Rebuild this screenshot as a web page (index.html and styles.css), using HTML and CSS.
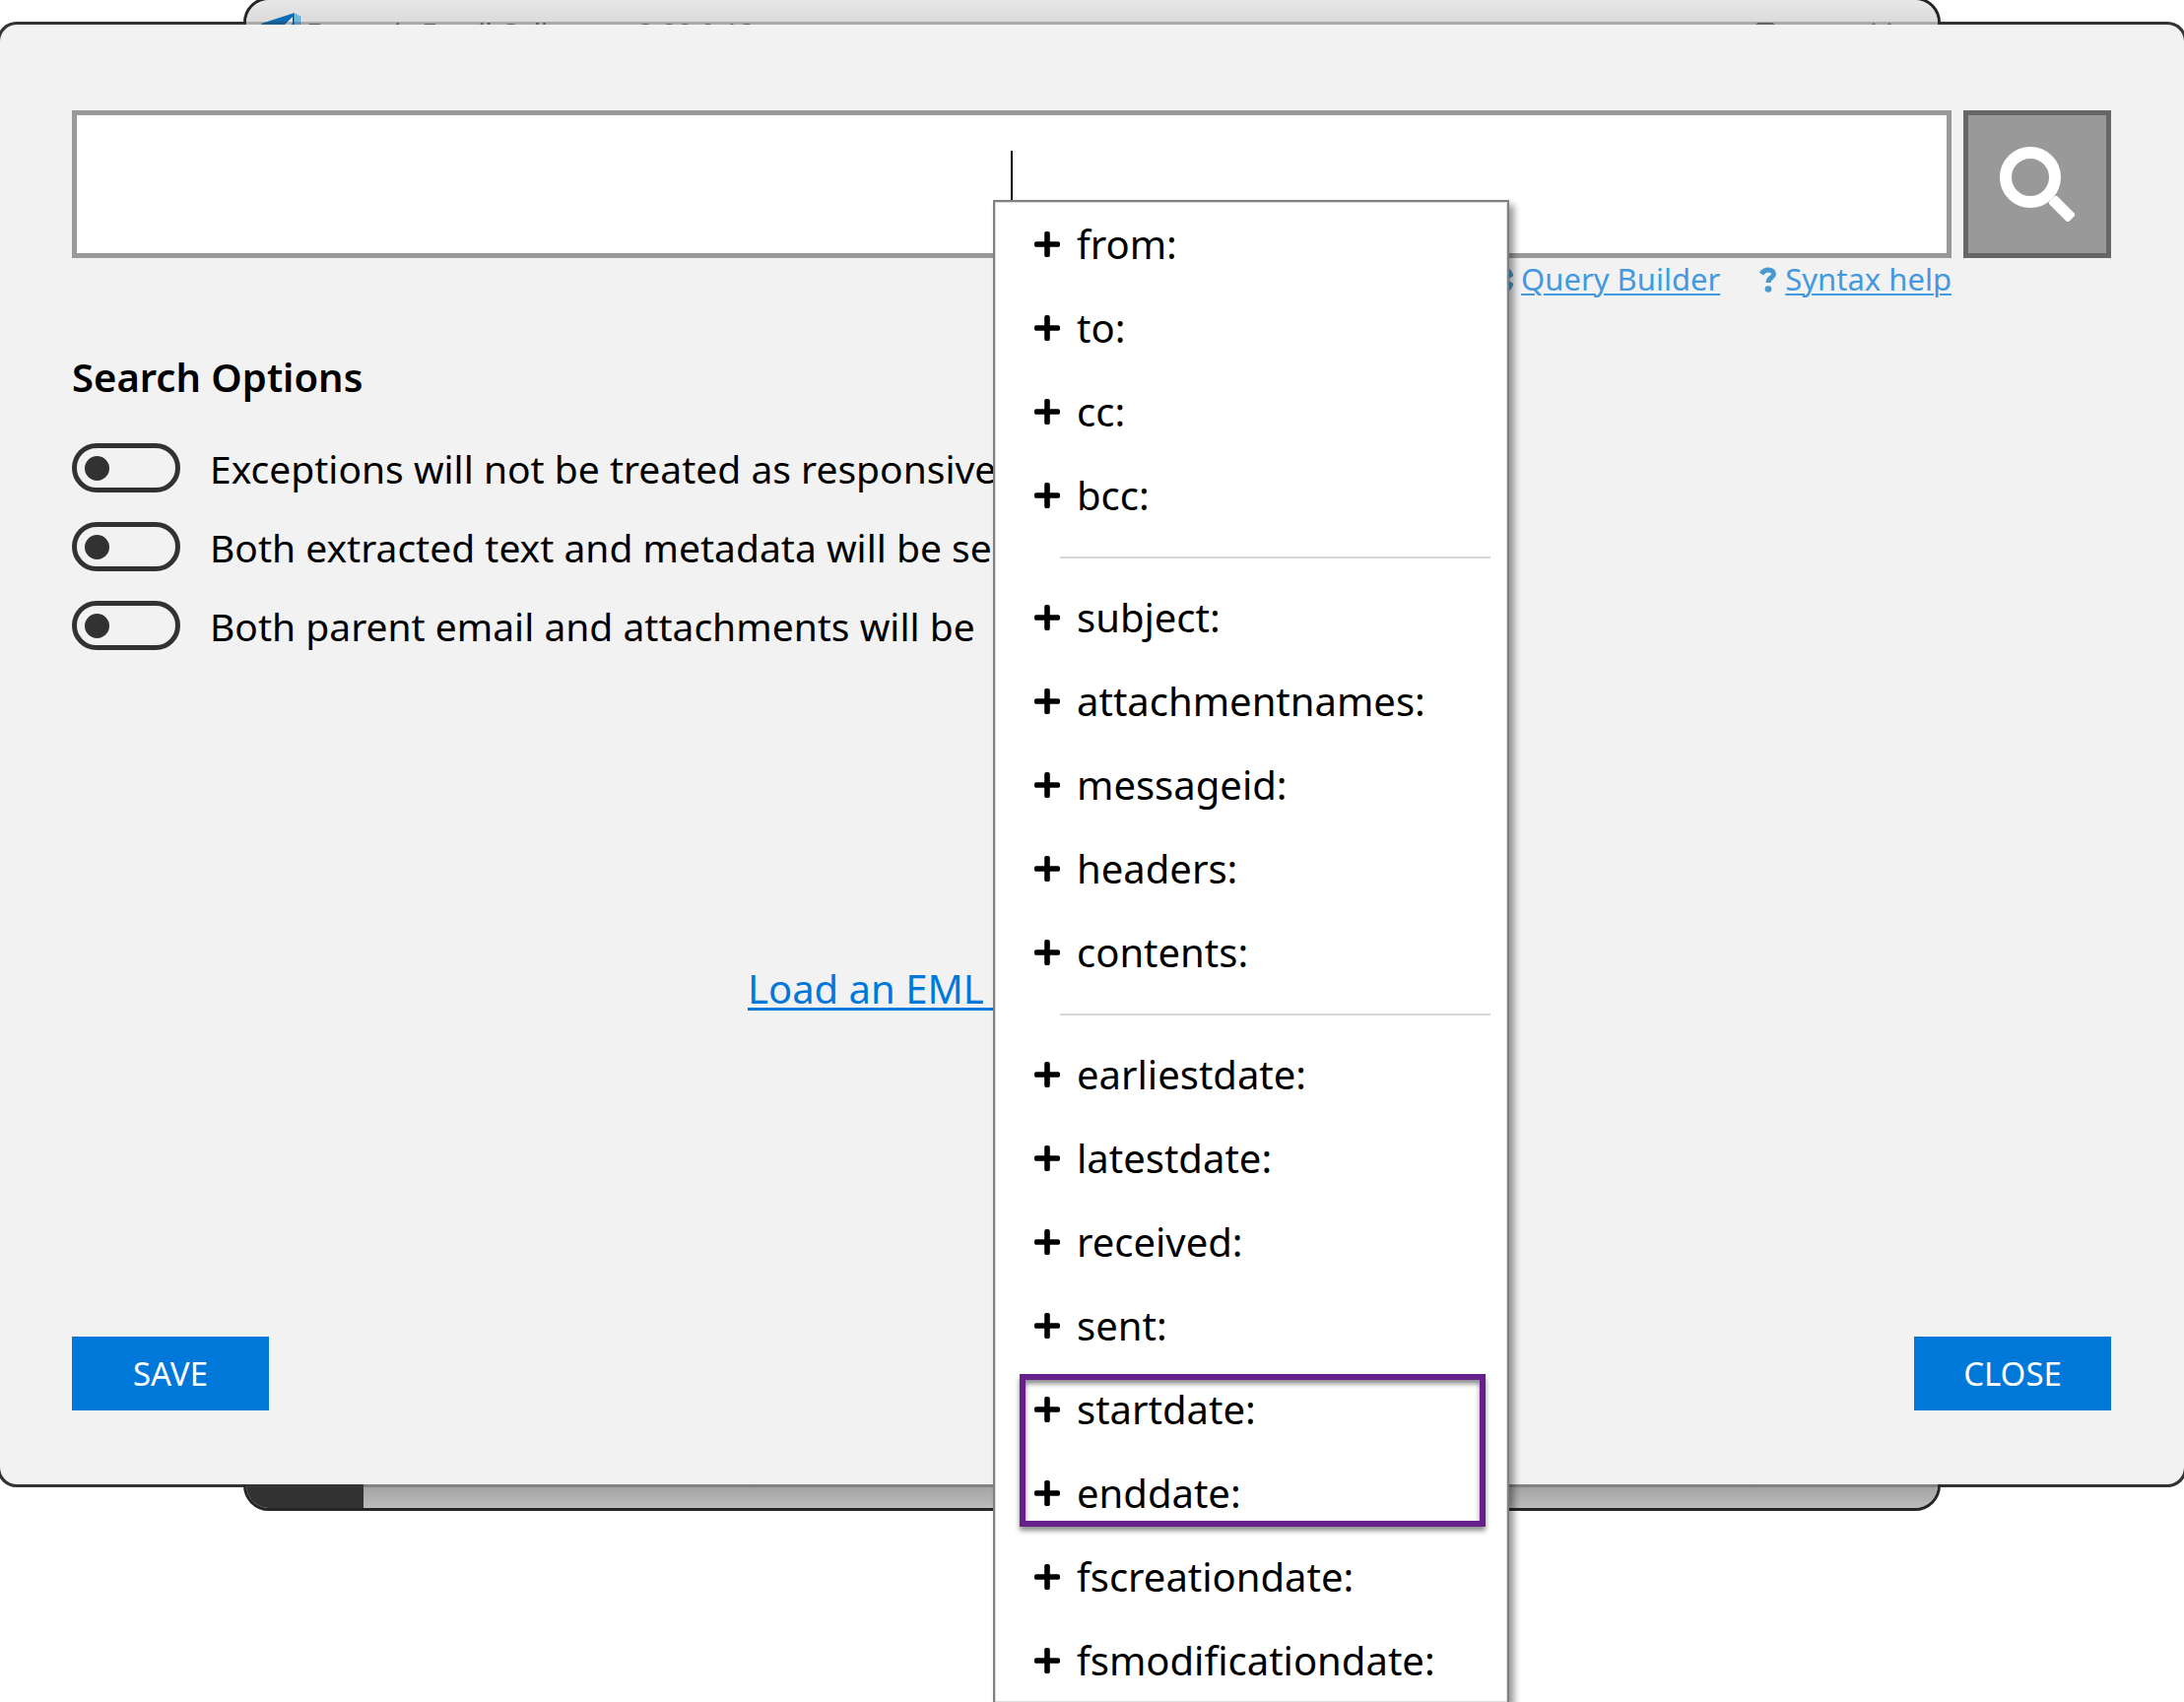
FILE: index.html
```html
<!DOCTYPE html>
<html lang="en">
<head>
    <meta charset="UTF-8">
    <meta name="viewport" content="width=device-width, initial-scale=1.0">
    <title>Forensic Email Collector</title>
    <link rel="stylesheet" href="styles.css">
</head>
<body>
    <svg class="sprite" aria-hidden="true">
        <symbol id="plus" viewBox="0 32 448 448">
            <path d="M416 208H272V64c0-17.67-14.33-32-32-32h-32c-17.67 0-32 14.33-32 32v144H32c-17.67 0-32 14.33-32 32v32c0 17.67 14.33 32 32 32h144v144c0 17.67 14.33 32 32 32h32c17.67 0 32-14.33 32-32V304h144c17.67 0 32-14.33 32-32v-32c0-17.67-14.33-32-32-32z"/>
        </symbol>
    </svg>

    <div class="stage">
        <div class="main-window">
            <div class="titlebar">
                <svg class="app-logo" viewBox="0 0 40 40">
                    <path d="M0 11 L34 0 V40 H12 Z" fill="#0a6cb4"/>
                    <path d="M14 22 L32 4 V10 L22 24 Z" fill="#e4e4e4"/>
                    <path d="M35 1h1v39h-1zM37 2h1v38h-1zM39 3h1v37h-1z" fill="#3f8ac0"/>
                </svg>
                <span class="app-title">Forensic Email Collector - 3.88.0.13</span>
                <span class="window-button"></span>
                <svg class="window-close" viewBox="0 0 20 20"><path d="M1 1 19 19M19 1 1 19" stroke="#777" stroke-width="3"/></svg>
            </div>
            <div class="statusbar"></div>
        </div>

        <main class="dialog">
            <div class="search-row">
                <div class="search-field">
                    <input class="search-input" type="text" aria-label="Search query">
                    <span class="caret"></span>

                    <div class="menu">
                        <button class="menu-item"><svg class="plus"><use href="#plus"/></svg>from:</button>
                        <button class="menu-item"><svg class="plus"><use href="#plus"/></svg>to:</button>
                        <button class="menu-item"><svg class="plus"><use href="#plus"/></svg>cc:</button>
                        <button class="menu-item"><svg class="plus"><use href="#plus"/></svg>bcc:</button>
                        <hr class="separator">
                        <button class="menu-item"><svg class="plus"><use href="#plus"/></svg>subject:</button>
                        <button class="menu-item"><svg class="plus"><use href="#plus"/></svg>attachmentnames:</button>
                        <button class="menu-item"><svg class="plus"><use href="#plus"/></svg>messageid:</button>
                        <button class="menu-item"><svg class="plus"><use href="#plus"/></svg>headers:</button>
                        <button class="menu-item"><svg class="plus"><use href="#plus"/></svg>contents:</button>
                        <hr class="separator">
                        <button class="menu-item"><svg class="plus"><use href="#plus"/></svg>earliestdate:</button>
                        <button class="menu-item"><svg class="plus"><use href="#plus"/></svg>latestdate:</button>
                        <button class="menu-item"><svg class="plus"><use href="#plus"/></svg>received:</button>
                        <button class="menu-item"><svg class="plus"><use href="#plus"/></svg>sent:</button>
                        <div class="highlighted">
                            <button class="menu-item"><svg class="plus"><use href="#plus"/></svg>startdate:</button>
                            <button class="menu-item"><svg class="plus"><use href="#plus"/></svg>enddate:</button>
                        </div>
                        <button class="menu-item"><svg class="plus"><use href="#plus"/></svg>fscreationdate:</button>
                        <button class="menu-item"><svg class="plus"><use href="#plus"/></svg>fsmodificationdate:</button>
                    </div>
                </div>
                <button class="search-button" aria-label="Search">
                    <svg viewBox="0 0 76 76">
                        <circle cx="31" cy="31" r="25" fill="none" stroke="#fff" stroke-width="12"/>
                        <path d="M57 53 73 69 69 73 53 57Z" fill="#fff" stroke="#fff" stroke-width="6" stroke-linejoin="round"/>
                    </svg>
                </button>
            </div>

            <div class="help-links">
                <span class="help-item">
                    <svg class="gear" viewBox="0 0 24 24">
                        <circle cx="12" cy="12" r="6" fill="none" stroke="currentColor" stroke-width="5"/>
                        <path d="M12 0v5M12 19v5M1 5l5 3M1 19l5-3M23 5l-5 3M23 19l-5-3" stroke="currentColor" stroke-width="7"/>
                    </svg>
                    <a href="#">Query Builder</a>
                </span>
                <span class="help-item">
                    <svg class="question" viewBox="0 0 18 26">
                        <path d="M2 7C4 4 6 3 9 3c3 0 5.500 1.600 5.500 4.200 0 3.800-5.500 3.600-5.500 8.800" fill="none" stroke="currentColor" stroke-width="5"/>
                        <circle cx="9" cy="22.500" r="3.300" fill="currentColor"/>
                    </svg>
                    <a href="#">Syntax help</a>
                </span>
            </div>

            <h2 class="options-title">Search Options</h2>
            <div class="options">
                <label class="option"><input type="checkbox" class="toggle">Exceptions will not be treated as responsive</label>
                <label class="option"><input type="checkbox" class="toggle">Both extracted text and metadata will be searched</label>
                <label class="option"><input type="checkbox" class="toggle">Both parent email and attachments will be</label>
            </div>

            <div class="load-row">
                <a href="#">Load an EML file</a>
            </div>

            <div class="actions">
                <button class="action">SAVE</button>
                <button class="action">CLOSE</button>
            </div>
        </main>
    </div>
</body>
</html>
```
FILE: styles.css
```css
* {
    box-sizing: border-box;
}
body {
    margin: 0;
    height: 100vh;
    overflow: hidden;
    background: #fff;
    color: #000;
    font-family: "Noto Sans", "Open Sans", sans-serif;
    font-size: 40px;
}
button, input {
    font: inherit;
    margin: 0;
}
.sprite {
    position: absolute;
    width: 0;
    height: 0;
}

/* The dialog is wider than the main window that it covers */
.stage {
    position: relative;
    padding: 22px 0 24px;
}
.stage::before {
    content: "";
    position: absolute;
    inset: 22px -3px 24px;
    background: #322f30;
    border-radius: 20px;
}
.main-window {
    position: absolute;
    inset: -3px 247px 0;
    display: flex;
    flex-direction: column;
    justify-content: space-between;
    overflow: hidden;
    background: #aaa;
    border: 3px solid #262626;
    border-radius: 26px;
}
.titlebar {
    display: flex;
    align-items: flex-start;
    gap: 6px;
    height: 60px;
    padding: 13px 47px 0 15px;
    background: linear-gradient(#e8e8e8, #d8d8d8 26px);
    color: #666;
    font-size: 28px;
    line-height: 40px;
}
.app-logo {
    width: 40px;
    height: 40px;
}
.app-title {
    flex: 1;
}
.window-button {
    width: 20px;
    height: 20px;
    margin: 10px 92px 0 0;
    border: 3px solid #777;
    border-radius: 4px;
}
.window-close {
    width: 20px;
    height: 20px;
    margin-top: 10px;
}
.statusbar {
    height: 60px;
    background: linear-gradient(90deg, #323232 119px, transparent 119px), linear-gradient(#a0a0a0 36px, #bcbcbc);
}

.dialog {
    position: relative;
    margin: 0 -3px;
    padding: 87px 74px 75px 73px;
    background: #f2f2f2;
    background-clip: padding-box;
    border: 3px solid rgba(60, 60, 60, 0.3);
    border-radius: 20px;
}
.search-row {
    display: flex;
    gap: 12px;
}
.search-field {
    position: relative;
    flex: 1;
}
.search-input {
    display: block;
    width: 100%;
    height: 150px;
    text-align: center;
    background: #fff;
    border: 5px solid #999;
    border-radius: 0;
    outline: none;
}
.caret {
    position: absolute;
    top: 41px;
    left: calc(50% - 1px);
    width: 2px;
    height: 54px;
    background: #000;
}
.search-button {
    display: flex;
    align-items: center;
    justify-content: center;
    width: 150px;
    height: 150px;
    padding: 0;
    background: #999;
    border: 5px solid #666;
}
.search-button svg {
    width: 76px;
    height: 76px;
}

.menu {
    position: absolute;
    z-index: 1;
    top: 91px;
    left: calc(50% - 19px);
    width: 524px;
    background: #fff;
    border: 2px solid #808080;
    box-shadow: inset 0 0 0 1px #ddd, 5px 5px 7px rgba(0, 0, 0, 0.4);
}
.menu-item {
    display: flex;
    align-items: center;
    gap: 17px;
    width: 100%;
    height: 85px;
    padding: 0 0 0 40px;
    background: none;
    border: none;
    color: #000;
    text-align: left;
}
.plus {
    width: 26px;
    height: 26px;
}
.separator {
    height: 2px;
    margin: 20px 17px 17px 66px;
    background: #d7d7d7;
    border: none;
}
.highlighted {
    position: relative;
}
.highlighted::after {
    content: "";
    position: absolute;
    inset: 7px 22px 8px 25px;
    border: 6px solid #652089;
    box-shadow: 0 4px 5px rgba(0, 0, 0, 0.45), inset 0 4px 5px rgba(0, 0, 0, 0.45);
}

.help-links {
    display: flex;
    justify-content: flex-end;
    gap: 40px;
    padding-right: 162px;
    font-size: 31px;
    line-height: 43px;
}
.help-item {
    display: flex;
    align-items: center;
    gap: 8px;
    color: #4899ce;
}
.help-item a {
    color: #4299e0;
    text-decoration-thickness: 2px;
    text-underline-offset: 3px;
}
.gear {
    width: 26px;
    height: 26px;
}
.question {
    width: 18px;
    height: 26px;
}

.options-title {
    margin: 50px 0 40px;
    font-size: 40px;
    font-weight: 600;
    line-height: 55px;
}
.options {
    display: flex;
    flex-direction: column;
    gap: 30px;
}
.option {
    display: flex;
    align-items: center;
    gap: 30px;
    height: 50px;
    font-size: 39px;
}
.toggle {
    appearance: none;
    display: flex;
    align-items: center;
    width: 110px;
    height: 50px;
    margin: 0;
    padding-left: 8px;
    border: 5px solid #323232;
    border-radius: 25px;
}
.toggle::before {
    content: "";
    width: 25px;
    height: 25px;
    background: #323232;
    border-radius: 50%;
}
.toggle:checked {
    justify-content: flex-end;
    padding: 0 8px 0 0;
}

.load-row {
    display: flex;
    justify-content: center;
    margin: 317px 0 326px;
    line-height: 54px;
}
.load-row a {
    width: 698px;
    color: #0078d9;
    text-decoration-thickness: 3px;
    text-underline-offset: 4px;
}

.actions {
    display: flex;
    justify-content: space-between;
}
.action {
    width: 200px;
    height: 75px;
    padding: 0;
    background: #0078d9;
    border: none;
    color: #fff;
    font-size: 33px;
}
```
